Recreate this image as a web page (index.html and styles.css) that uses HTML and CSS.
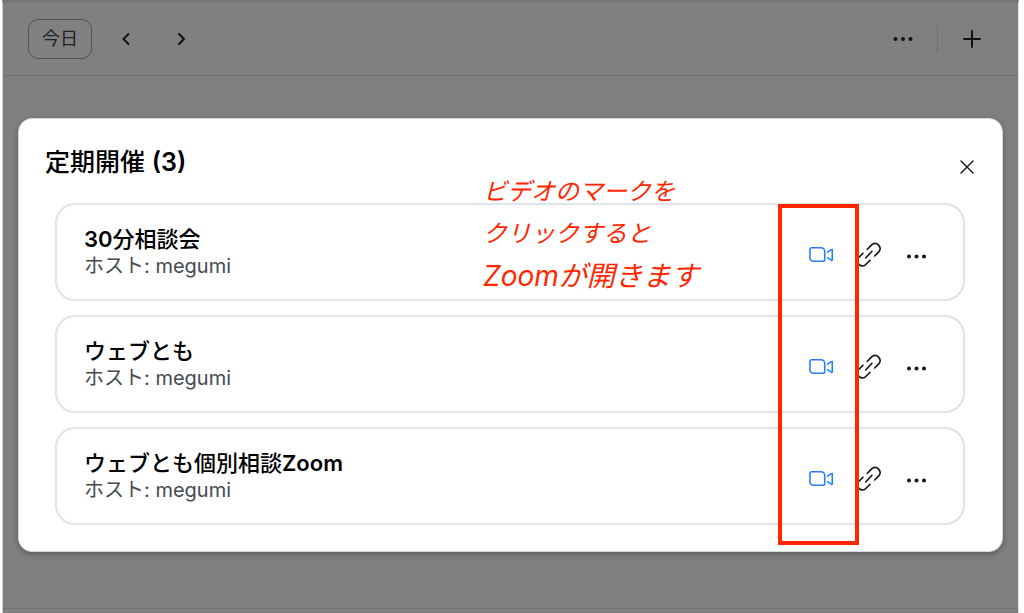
FILE: index.html
```html
<!DOCTYPE html>
<html lang="ja">

<head>
    <meta charset="UTF-8">
    <meta name="viewport" content="width=device-width, initial-scale=1.0">
    <title>定期開催</title>
    <link rel="stylesheet" href="styles.css">
</head>

<body>
    <!-- Shared icons -->
    <svg class="sprite" aria-hidden="true">
        <symbol id="icon-video" viewBox="0 0 26 26">
            <path d="M3.500 5.700h9.700a3.500 3.500 0 0 1 3.500 3.500v8.600a1.500 1.500 0 0 1-1.500 1.500H5.500a3.500 3.500 0 0 1-3.500-3.500V7.200a1.500 1.500 0 0 1 1.500-1.500z" />
            <path d="M19.600 10.200l3.700-2.600q1-.5 1 .5v9.600q0 1-1 .5l-3.700-2.600" />
        </symbol>
        <symbol id="icon-link" viewBox="0 0 26 26">
            <path d="M11.300 7.300L16 2.600a5 5 0 0 1 7 7L18.700 14" />
            <path d="M9.700 16L16 9.300" />
            <path d="M14 18.300l-4.500 4.500a5 5 0 0 1-7-7L7 11.300" />
        </symbol>
        <symbol id="icon-dots" viewBox="0 0 26 26">
            <circle cx="5" cy="14.500" r="2" />
            <circle cx="12.500" cy="14.500" r="2" />
            <circle cx="20" cy="14.500" r="2" />
        </symbol>
    </svg>

    <div class="app">
        <!-- Calendar toolbar -->
        <header class="toolbar">
            <button class="today">今日</button>
            <button class="tool" aria-label="前へ">
                <svg viewBox="0 0 20 20"><path d="M12.500 5L7.500 10l5 5" /></svg>
            </button>
            <button class="tool" aria-label="次へ">
                <svg viewBox="0 0 20 20"><path d="M8 5l5 5-5 5" /></svg>
            </button>
            <span class="spacer"></span>
            <button class="tool" aria-label="その他">
                <svg class="icon dots" viewBox="0 0 26 26">
                    <circle cx="5.500" cy="13" r="2" />
                    <circle cx="13" cy="13" r="2" />
                    <circle cx="20.500" cy="13" r="2" />
                </svg>
            </button>
            <span class="divider"></span>
            <button class="tool" aria-label="追加">
                <svg viewBox="0 0 20 20"><path d="M10 2v16M2 10h16" /></svg>
            </button>
        </header>

        <!-- Recurring meetings -->
        <section class="modal" role="dialog" aria-labelledby="modal-title">
            <div class="modal-header">
                <h1 id="modal-title">定期開催 <b>(3)</b></h1>
                <button class="close" aria-label="閉じる">
                    <svg viewBox="0 0 14 14"><path d="M1 1l12 12M13 1L1 13" /></svg>
                </button>
            </div>

            <div class="meetings">
                <article class="meeting">
                    <div class="info">
                        <h2><b>30</b>分相談会</h2>
                        <p>ホスト: megumi</p>
                    </div>
                    <div class="actions">
                        <button aria-label="ビデオ"><svg class="icon video"><use href="#icon-video" /></svg></button>
                        <button aria-label="リンク"><svg class="icon"><use href="#icon-link" /></svg></button>
                        <button aria-label="その他"><svg class="icon dots"><use href="#icon-dots" /></svg></button>
                    </div>
                </article>
                <article class="meeting">
                    <div class="info">
                        <h2>ウェブとも</h2>
                        <p>ホスト: megumi</p>
                    </div>
                    <div class="actions">
                        <button aria-label="ビデオ"><svg class="icon video"><use href="#icon-video" /></svg></button>
                        <button aria-label="リンク"><svg class="icon"><use href="#icon-link" /></svg></button>
                        <button aria-label="その他"><svg class="icon dots"><use href="#icon-dots" /></svg></button>
                    </div>
                </article>
                <article class="meeting">
                    <div class="info">
                        <h2>ウェブとも個別相談<b>Zoom</b></h2>
                        <p>ホスト: megumi</p>
                    </div>
                    <div class="actions">
                        <button aria-label="ビデオ"><svg class="icon video"><use href="#icon-video" /></svg></button>
                        <button aria-label="リンク"><svg class="icon"><use href="#icon-link" /></svg></button>
                        <button aria-label="その他"><svg class="icon dots"><use href="#icon-dots" /></svg></button>
                    </div>
                </article>

                <!-- Red notes on top of the list -->
                <p class="note">
                    <span>ビデオのマークを</span>
                    <span>クリックすると</span>
                    <span class="large">Zoomが開きます</span>
                </p>
                <div class="highlight"></div>
            </div>
        </section>

        <div class="bottom-bar"></div>
    </div>
</body>

</html>
```

FILE: styles.css
```css
* {
    box-sizing: border-box;
}

body {
    margin: 0;
    background-color: #fff;
    color: #111;
    font-family: Inter, "Noto Sans CJK JP", sans-serif;
}

h1,
h2,
p {
    margin: 0;
}

b {
    font-weight: 600;
}

button {
    padding: 0;
    border: none;
    background: none;
    color: inherit;
    font-family: inherit;
    cursor: pointer;
}

svg {
    display: block;
    fill: none;
    stroke: currentColor;
    stroke-width: 2;
    stroke-linecap: round;
    stroke-linejoin: round;
}

.sprite {
    display: none;
}

.icon {
    width: 26px;
    height: 26px;
    stroke-width: 1.6;
}

.dots {
    fill: currentColor;
    stroke: none;
}

.video {
    color: #2680f5;
}

.app {
    display: flex;
    flex-direction: column;
    min-height: 100vh;
    margin: 0 5px 0 2px;
    background-color: #808080;
    border-left: 1px solid #c9ced4;
    border-right: 1px solid #dfe3e8;
    border-top: 3px solid #74777a;
}

/* Toolbar */
.toolbar {
    display: flex;
    align-items: center;
    gap: 13px;
    height: 73px;
    padding: 0 25px;
    border-bottom: 1px solid #6c6e70;
}

.today {
    width: 64px;
    height: 40px;
    border: 1px solid #4c545c;
    border-radius: 10px;
    color: #222;
    font-size: 18px;
    line-height: 36px;
}

.tool {
    display: flex;
    align-items: center;
    justify-content: center;
    width: 42px;
    height: 40px;
}

.tool svg {
    width: 20px;
    height: 20px;
}

.tool .dots {
    width: 26px;
    height: 26px;
}

.spacer {
    flex: 1;
}

.divider {
    width: 1px;
    height: 27px;
    background-color: #6c6e70;
}

/* Modal */
.modal {
    margin: 42px 15px 0;
    padding: 26px 37px 26px 36px;
    background-color: #fff;
    border: 1px solid #d5dade;
    border-radius: 14px;
    box-shadow: 0 2px 6px rgba(0, 0, 0, 0.3);
}

.modal-header {
    display: flex;
    justify-content: space-between;
    margin: 0 -15px 24px -10px;
}

.modal-header h1 {
    color: #000;
    font-size: 25px;
    font-weight: 500;
    line-height: 34px;
}

.close {
    display: flex;
    align-items: center;
    justify-content: center;
    width: 26px;
    height: 44px;
    margin-bottom: -10px;
}

.close svg {
    width: 14px;
    height: 14px;
    stroke-width: 1.4;
}

.meetings {
    position: relative;
    display: flex;
    flex-direction: column;
    gap: 14px;
}

.meeting {
    display: flex;
    align-items: center;
    justify-content: space-between;
    padding: 20px 33px 20px 27px;
    border: 2px solid #e0e3e8;
    border-radius: 20px;
}

.info h2 {
    color: #000;
    font-size: 22px;
    font-weight: 500;
    line-height: 28px;
}

.info p {
    color: #444b53;
    font-size: 20px;
    line-height: 26px;
}

.actions {
    display: flex;
    gap: 22px;
    padding-top: 6px;
}

/* Notes */
.note {
    position: absolute;
    top: -32px;
    right: 182px;
    width: 300px;
    color: #ff2600;
    font-size: 24px;
    font-style: italic;
    line-height: 42px;
    pointer-events: none;
}

.note span {
    display: block;
}

.note .large {
    font-size: 28px;
}

.highlight {
    position: absolute;
    top: 1px;
    right: 106px;
    bottom: -20px;
    width: 81px;
    border: 4px solid #ff2600;
    pointer-events: none;
}

.bottom-bar {
    height: 5px;
    margin-top: auto;
    border-top: 1px solid #6c6e70;
}
```
